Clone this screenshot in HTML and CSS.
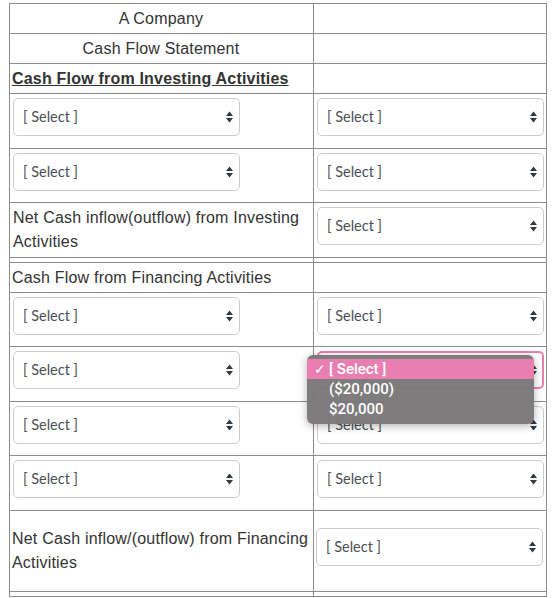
FILE: index.html
```html
<!DOCTYPE html>
<html lang="en">
<head>
    <meta charset="UTF-8">
    <title>Cash Flow Statement</title>
    <link rel="stylesheet" href="styles.css">
</head>
<body>
    <table class="sheet">
        <colgroup>
            <col class="col-label">
            <col class="col-value">
        </colgroup>
        <tr class="text-row">
            <td class="center">A Company</td>
            <td></td>
        </tr>
        <tr class="text-row">
            <td class="center">Cash Flow Statement</td>
            <td></td>
        </tr>
        <tr class="text-row">
            <td><strong class="heading">Cash Flow from Investing Activities</strong></td>
            <td></td>
        </tr>
        <tr>
            <td><div class="select"><span>[ Select ]</span><svg class="arrows" width="7" height="12" viewBox="0 0 7 12"><path d="M0 5 L3.5 0.5 L7 5 Z M0 7 L7 7 L3.5 11.5 Z"/></svg></div></td>
            <td><div class="select"><span>[ Select ]</span><svg class="arrows" width="7" height="12" viewBox="0 0 7 12"><path d="M0 5 L3.5 0.5 L7 5 Z M0 7 L7 7 L3.5 11.5 Z"/></svg></div></td>
        </tr>
        <tr>
            <td><div class="select"><span>[ Select ]</span><svg class="arrows" width="7" height="12" viewBox="0 0 7 12"><path d="M0 5 L3.5 0.5 L7 5 Z M0 7 L7 7 L3.5 11.5 Z"/></svg></div></td>
            <td><div class="select"><span>[ Select ]</span><svg class="arrows" width="7" height="12" viewBox="0 0 7 12"><path d="M0 5 L3.5 0.5 L7 5 Z M0 7 L7 7 L3.5 11.5 Z"/></svg></div></td>
        </tr>
        <tr>
            <td>Net Cash inflow(outflow) from Investing Activities</td>
            <td><div class="select"><span>[ Select ]</span><svg class="arrows" width="7" height="12" viewBox="0 0 7 12"><path d="M0 5 L3.5 0.5 L7 5 Z M0 7 L7 7 L3.5 11.5 Z"/></svg></div></td>
        </tr>
        <tr class="spacer"><td></td><td></td></tr>
        <tr class="text-row">
            <td>Cash Flow from Financing Activities</td>
            <td></td>
        </tr>
        <tr>
            <td><div class="select"><span>[ Select ]</span><svg class="arrows" width="7" height="12" viewBox="0 0 7 12"><path d="M0 5 L3.5 0.5 L7 5 Z M0 7 L7 7 L3.5 11.5 Z"/></svg></div></td>
            <td><div class="select"><span>[ Select ]</span><svg class="arrows" width="7" height="12" viewBox="0 0 7 12"><path d="M0 5 L3.5 0.5 L7 5 Z M0 7 L7 7 L3.5 11.5 Z"/></svg></div></td>
        </tr>
        <tr>
            <td><div class="select"><span>[ Select ]</span><svg class="arrows" width="7" height="12" viewBox="0 0 7 12"><path d="M0 5 L3.5 0.5 L7 5 Z M0 7 L7 7 L3.5 11.5 Z"/></svg></div></td>
            <td>
                <div class="select-wrap">
                    <div class="select focused"><span>[ Select ]</span><svg class="arrows" width="7" height="12" viewBox="0 0 7 12"><path d="M0 5 L3.5 0.5 L7 5 Z M0 7 L7 7 L3.5 11.5 Z"/></svg></div>
                    <ul class="menu">
                        <li class="active"><span class="check">✓</span>[ Select ]</li>
                        <li>($20,000)</li>
                        <li>$20,000</li>
                    </ul>
                </div>
            </td>
        </tr>
        <tr>
            <td><div class="select"><span>[ Select ]</span><svg class="arrows" width="7" height="12" viewBox="0 0 7 12"><path d="M0 5 L3.5 0.5 L7 5 Z M0 7 L7 7 L3.5 11.5 Z"/></svg></div></td>
            <td><div class="select"><span>[ Select ]</span><svg class="arrows" width="7" height="12" viewBox="0 0 7 12"><path d="M0 5 L3.5 0.5 L7 5 Z M0 7 L7 7 L3.5 11.5 Z"/></svg></div></td>
        </tr>
        <tr>
            <td><div class="select"><span>[ Select ]</span><svg class="arrows" width="7" height="12" viewBox="0 0 7 12"><path d="M0 5 L3.5 0.5 L7 5 Z M0 7 L7 7 L3.5 11.5 Z"/></svg></div></td>
            <td><div class="select"><span>[ Select ]</span><svg class="arrows" width="7" height="12" viewBox="0 0 7 12"><path d="M0 5 L3.5 0.5 L7 5 Z M0 7 L7 7 L3.5 11.5 Z"/></svg></div></td>
        </tr>
        <tr class="tall">
            <td>Net Cash inflow/(outflow) from Financing Activities</td>
            <td><div class="select"><span>[ Select ]</span><svg class="arrows" width="7" height="12" viewBox="0 0 7 12"><path d="M0 5 L3.5 0.5 L7 5 Z M0 7 L7 7 L3.5 11.5 Z"/></svg></div></td>
        </tr>
        <tr class="spacer"><td></td><td></td></tr>
    </table>
</body>
</html>
```

FILE: styles.css
```css
body {
    margin: 0;
    padding: 3px 0 0 9px;
    background: #fff;
    font-family: "Liberation Sans", Arial, sans-serif;
    font-size: 16px;
    letter-spacing: 0.2px;
    color: #333;
}

.sheet {
    border-collapse: collapse;
    table-layout: fixed;
    width: 538px;
}

.col-label {
    width: 304px;
}

.sheet td {
    border: 1px solid #8b8b8b;
    padding: 2px 3px;
    line-height: 24px;
    vertical-align: middle;
}

.text-row td {
    padding: 3px 3px 2px 2px;
}

.center {
    text-align: center;
}

.heading {
    text-decoration: underline;
}

.spacer td {
    height: 4px;
    padding: 0;
    line-height: 0;
    font-size: 0;
}

.tall td {
    padding: 15.5px 3px 15.5px 2px;
}

/* select box look */
.select {
    display: flex;
    align-items: center;
    justify-content: space-between;
    box-sizing: border-box;
    width: 227px;
    height: 38px;
    margin: 2px 0 9.5px;
    padding: 0 6px 0 9px;
    border: 1px solid #c7cdd1;
    border-radius: 5px;
    background: #fff;
    font-family: Lato, "Liberation Sans", sans-serif;
    font-size: 14.5px;
    letter-spacing: 0;
    color: #4a5157;
}

.arrows {
    fill: #2d3b45;
}

.select.focused {
    border: 2px solid #e97fb1;
    padding: 0 5px 0 8px;
}

.select-wrap {
    position: relative;
}

.menu {
    position: absolute;
    left: -10px;
    top: 4px;
    width: 227px;
    margin: 0;
    padding: 4px 0 5px;
    list-style: none;
    background: rgba(122, 120, 121, 0.97);
    border-radius: 6px;
    box-shadow: 0 2px 8px rgba(0, 0, 0, 0.3);
    font-family: Roboto, "Liberation Sans", sans-serif;
    font-weight: 500;
    font-size: 15px;
    letter-spacing: 0;
    color: #fff;
}

.menu li {
    height: 20px;
    line-height: 20px;
    padding-left: 22px;
    position: relative;
}

.menu li.active {
    background: #e97fb1;
}

.check {
    position: absolute;
    left: 7px;
    font-size: 14px;
}
```
